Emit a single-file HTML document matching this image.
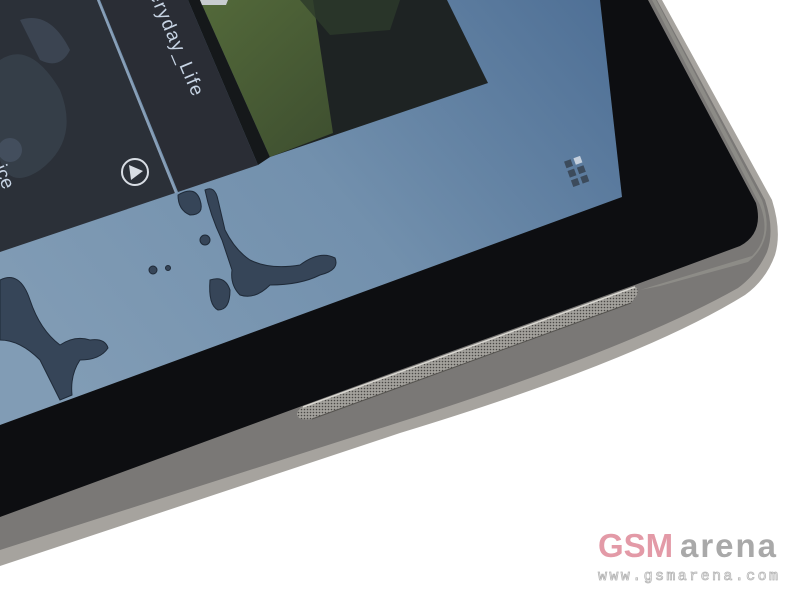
<!DOCTYPE html>
<html><head><meta charset="utf-8"><style>
html,body{margin:0;padding:0;background:#fff;width:800px;height:600px;overflow:hidden}
svg{display:block}
</style></head><body>
<svg width="800" height="600" viewBox="0 0 800 600" xmlns="http://www.w3.org/2000/svg">
<defs>
<linearGradient id="blue" x1="600" y1="0" x2="100" y2="420" gradientUnits="userSpaceOnUse">
<stop offset="0" stop-color="#4f7096"/><stop offset="0.5" stop-color="#7290ad"/><stop offset="1" stop-color="#819cb5"/></linearGradient>
<linearGradient id="grass" x1="200" y1="0" x2="330" y2="140" gradientUnits="userSpaceOnUse">
<stop offset="0" stop-color="#53693a"/><stop offset="1" stop-color="#3f5030"/></linearGradient>
<pattern id="dots" width="3" height="3" patternUnits="userSpaceOnUse">
<rect width="3" height="3" fill="#a3a19c"/><circle cx="1.5" cy="1.5" r="0.8" fill="#4a4846"/></pattern>
<clipPath id="scr"><path d="M0,0 L600,0 L622,197 L0,425 Z"/></clipPath>
</defs>
<rect width="800" height="600" fill="#fff"/>
<!-- body rim -->
<path d="M0,0 L662,0 L772,200 Q782,232 775,255 Q766,280 745,295 Q640,360 400,433 L0,566 Z" fill="#a6a39e"/>
<!-- body grey -->
<path d="M0,0 L657,0 L765,200 Q775,230 767,252 Q757,274 738,288 Q632,348 400,422 L0,550 Z" fill="#7a7876"/>
<path d="M652,0 L760,205 Q772,236 752,256 L640,290 L660,286 L748,262 Q776,240 762,200 L656,0 Z" fill="#96948f" opacity="0.7"/>
<!-- black glass -->
<path d="M0,0 L648,0 L756,203 Q764,233 740,246 L640,283 L400,370 L0,517 Z" fill="#0d0e11"/>
<!-- screen -->
<path d="M0,0 L600,0 L622,197 L0,425 Z" fill="url(#blue)"/>
<g clip-path="url(#scr)">
<path d="M0,0 L97,0 L175,193 L0,252 Z" fill="#2b3038"/>
<path d="M0,60 Q30,40 60,90 Q80,140 40,170 Q10,190 0,160 Z" fill="#3a4450" opacity="0.7"/>
<path d="M20,20 Q50,10 70,50 Q60,70 40,60 Z" fill="#465262" opacity="0.6"/>
<circle cx="10" cy="150" r="12" fill="#4a5666" opacity="0.7"/>
<line x1="98" y1="0" x2="176" y2="193" stroke="#8aa0b8" stroke-width="2"/>
<path d="M100,0 L188,0 L258,165 L178,192 Z" fill="#2a2d35"/>
<path d="M188,0 L200,0 L270,157 L258,165 Z" fill="#15181a"/>
<path d="M200,0 L447,0 L488,83 L270,157 Z" fill="#1e2323"/>
<path d="M200,0 L313,0 L333,133 L270,157 Z" fill="url(#grass)"/>
<path d="M300,0 L400,0 L390,30 L330,35 Z" fill="#2c3a2a" opacity="0.8"/>
<path d="M200,0 L228,0 L226,5 L202,5 Z" fill="#c8ccd0"/>
<text transform="translate(149,-6) rotate(67)" font-family="Liberation Sans, sans-serif" font-size="19" fill="#c7d4e4" textLength="112">eryday_Life</text>
<text transform="translate(-6,168) rotate(67)" font-family="Liberation Sans, sans-serif" font-size="19" fill="#c7d4e4">ice</text>
<circle cx="135" cy="172" r="13" fill="none" stroke="#d8dde4" stroke-width="2"/>
<path d="M129,165 L143,171 L131,180 Z" fill="#d8dde4"/>
<g transform="translate(582,170) rotate(-20)" fill="#3c4b5c">
<rect x="-14" y="-14" width="7" height="7"/><rect x="-4" y="-14" width="7" height="7" fill="#c4cfdc"/>
<rect x="-14" y="-4" width="7" height="7"/><rect x="-4" y="-4" width="7" height="7"/>
<rect x="-14" y="6" width="7" height="7"/><rect x="-4" y="6" width="7" height="7"/>
</g>
<g fill="#364558" stroke="#1f2a38" stroke-width="1">
<path d="M178,195 Q195,185 200,200 Q205,215 190,215 Q178,210 178,195 Z"/>
<path d="M205,190 Q215,185 218,200 L225,230 Q235,250 250,260 Q270,270 300,265 Q320,250 335,258 Q340,270 320,275 Q300,285 270,285 Q255,300 240,295 Q230,285 232,270 L222,240 Q210,215 205,190 Z"/>
<circle cx="205" cy="240" r="5"/>
<path d="M210,280 Q225,275 230,290 Q230,310 218,310 Q208,305 210,280 Z"/>
<circle cx="153" cy="270" r="4"/><circle cx="168" cy="268" r="2.5"/>
<path d="M0,280 Q20,270 30,300 Q40,330 60,345 Q75,335 90,340 Q105,338 108,348 Q100,360 80,360 Q70,375 72,395 L60,400 Q50,380 40,360 Q20,340 0,340 Z"/>
</g>
</g>
<!-- speaker -->
<path d="M303,407 L635,287 Q639,288 637,295 L631,303 L312,419 Q299,421 297,415 Q297,409 303,407 Z" fill="url(#dots)"/>
<path d="M303,407 L635,287" stroke="#d8d6d0" stroke-width="1.5"/>
<path d="M312,419 L631,303" stroke="#55534f" stroke-width="1"/>
<!-- watermark -->
<text x="598" y="557" font-family="Liberation Sans, sans-serif" font-weight="bold" font-size="33" fill="#e39aa7">GSM</text>
<text x="680" y="557" font-family="Liberation Sans, sans-serif" font-weight="bold" font-size="33" fill="#a9a9a9" textLength="96">arena</text>
<text x="598" y="580" font-family="Liberation Mono, monospace" font-size="15" fill="none" stroke="#b4b4b4" stroke-width="0.8" textLength="180">www.gsmarena.com</text>
</svg>
</body></html>
